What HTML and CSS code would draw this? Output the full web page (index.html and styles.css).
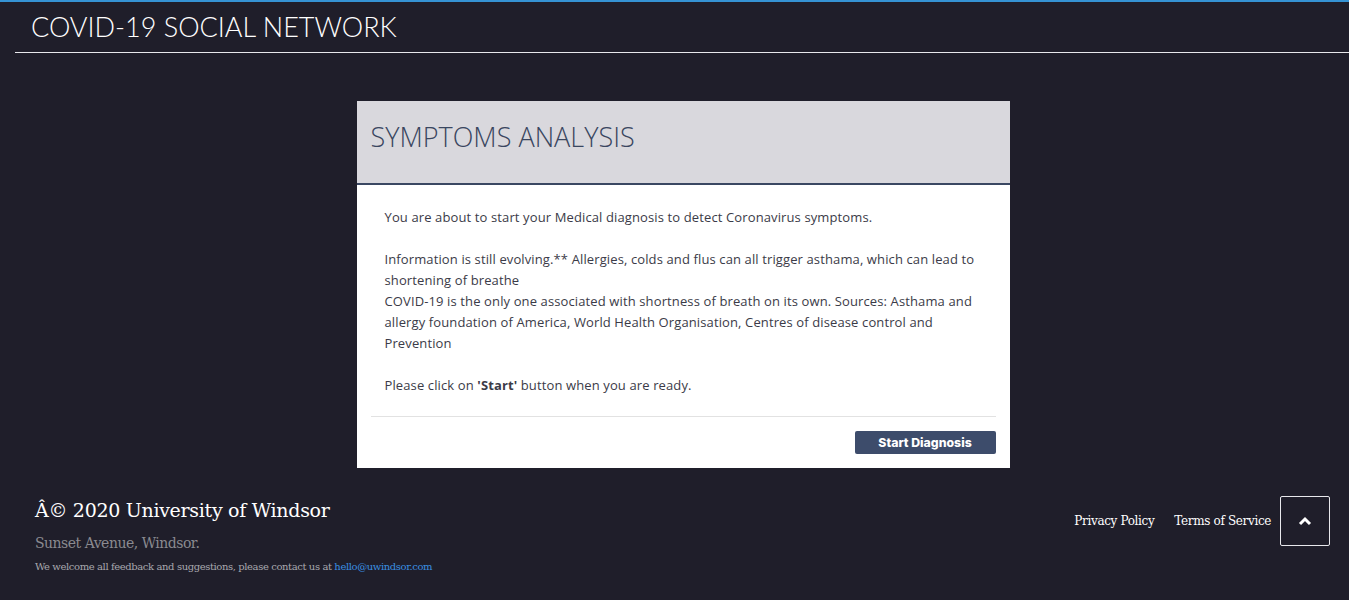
FILE: index.html
```html
<!DOCTYPE html>
<html>
<head>
<meta charset="utf-8">
<link rel="stylesheet" href="styles.css">
</head>
<body>
<header class="topbar">
  <h1 class="brand">COVID-19 SOCIAL NETWORK</h1>
</header>
<main class="main">
  <section class="card">
    <div class="card-head">
      <h2 class="card-title">SYMPTOMS ANALYSIS</h2>
    </div>
    <div class="card-body">
      <p>You are about to start your Medical diagnosis to detect Coronavirus symptoms.</p>
      <p>Information is still evolving.** Allergies, colds and flus can all trigger asthama, which can lead to shortening of breathe<br>COVID-19 is the only one associated with shortness of breath on its own. Sources: Asthama and allergy foundation of America, World Health Organisation, Centres of disease control and Prevention</p>
      <p>Please click on <b>'Start'</b> button when you are ready.</p>
    </div>
    <div class="card-foot">
      <button class="btn">Start Diagnosis</button>
    </div>
  </section>
</main>
<footer class="footer">
  <div class="foot-left">
    <div class="copy">Â© 2020 University of Windsor</div>
    <div class="addr">Sunset Avenue, Windsor.</div>
    <div class="note">We welcome all feedback and suggestions, please contact us at <a href="#">hello@uwindsor.com</a></div>
  </div>
  <div class="foot-right">
    <a href="#" class="flink">Privacy Policy</a>
    <a href="#" class="flink">Terms of Service</a>
    <a href="#" class="totop"><svg width="14" height="10" viewBox="0 0 14 10"><path d="M2 8 L7 3 L12 8" fill="none" stroke="#fff" stroke-width="3"/></svg></a>
  </div>
</footer>
</body>
</html>
```

FILE: styles.css
```css
html, body {
  margin: 0;
  padding: 0;
}
body {
  background: #1f1e2a;
  border-top: 2px solid #3593d4;
  min-height: 598px;
  font-family: "Open Sans", sans-serif;
}
.topbar {
  margin-left: 15px;
  border-bottom: 1px solid #e8e8ec;
  height: 50px;
  display: flex;
  align-items: center;
}
.brand {
  margin: 0 0 0 16px;
  font-family: "Lato", sans-serif;
  font-weight: 300;
  font-size: 27px;
  color: #fff;
  padding-bottom: 2px;
}
.main {
  display: flex;
  justify-content: center;
  padding-top: 48px;
  padding-left: 17px;
}
.card {
  width: 653px;
  background: #fff;
}
.card-head {
  background: #d9d8dd;
  height: 82px;
  border-bottom: 2px solid #3a4762;
  display: flex;
  align-items: center;
}
.card-title {
  margin: 0 0 0 14px;
  font-family: "Open Sans", sans-serif;
  font-weight: 300;
  font-size: 27px;
  color: #3a4660;
  padding-bottom: 12px;
}
.card-body {
  padding: 22px 28px 20px 28px;
  color: #3b3b48;
  font-size: 13px;
  letter-spacing: 0.12px;
  line-height: 21px;
}
.card-body p {
  margin: 0 0 21px 0;
}
.card-body p:last-child {
  margin-bottom: 0;
}
.card-foot {
  margin: 0 14px;
  border-top: 1px solid #e2e2e2;
  padding: 14px 0 14px;
  display: flex;
  justify-content: flex-end;
}
.btn {
  background: #3d4c6b;
  color: #fff;
  border: none;
  border-radius: 2px;
  width: 141px;
  height: 23px;
  font-family: "Inter", sans-serif;
  font-weight: 800;
  font-size: 12.3px;
  padding: 0;
}
.footer {
  display: flex;
  justify-content: space-between;
  padding: 29px 19px 0 35px;
  font-family: "DejaVu Serif", serif;
}
.copy {
  color: #fff;
  font-size: 19px;
  letter-spacing: -0.3px;
  line-height: 26px;
}
.addr {
  color: #8a8a90;
  font-size: 14px;
  margin-top: 12px;
  letter-spacing: -0.5px;
}
.note {
  color: #a8a8ae;
  font-size: 10px;
  margin-top: 10px;
  letter-spacing: -0.4px;
}
.note a {
  color: #3a8fe0;
  text-decoration: none;
}
.foot-right {
  display: flex;
  align-items: center;
  align-self: flex-start;
  margin-top: -1px;
}
.flink {
  color: #fff;
  text-decoration: none;
  font-size: 12px;
  letter-spacing: -0.35px;
  margin-right: 20px;
}
.flink:nth-child(2) {
  margin-right: 9px;
}
.totop {
  width: 48px;
  height: 48px;
  border: 1px solid #e8e8ec;
  border-radius: 2px;
  display: flex;
  align-items: center;
  justify-content: center;
}
```
